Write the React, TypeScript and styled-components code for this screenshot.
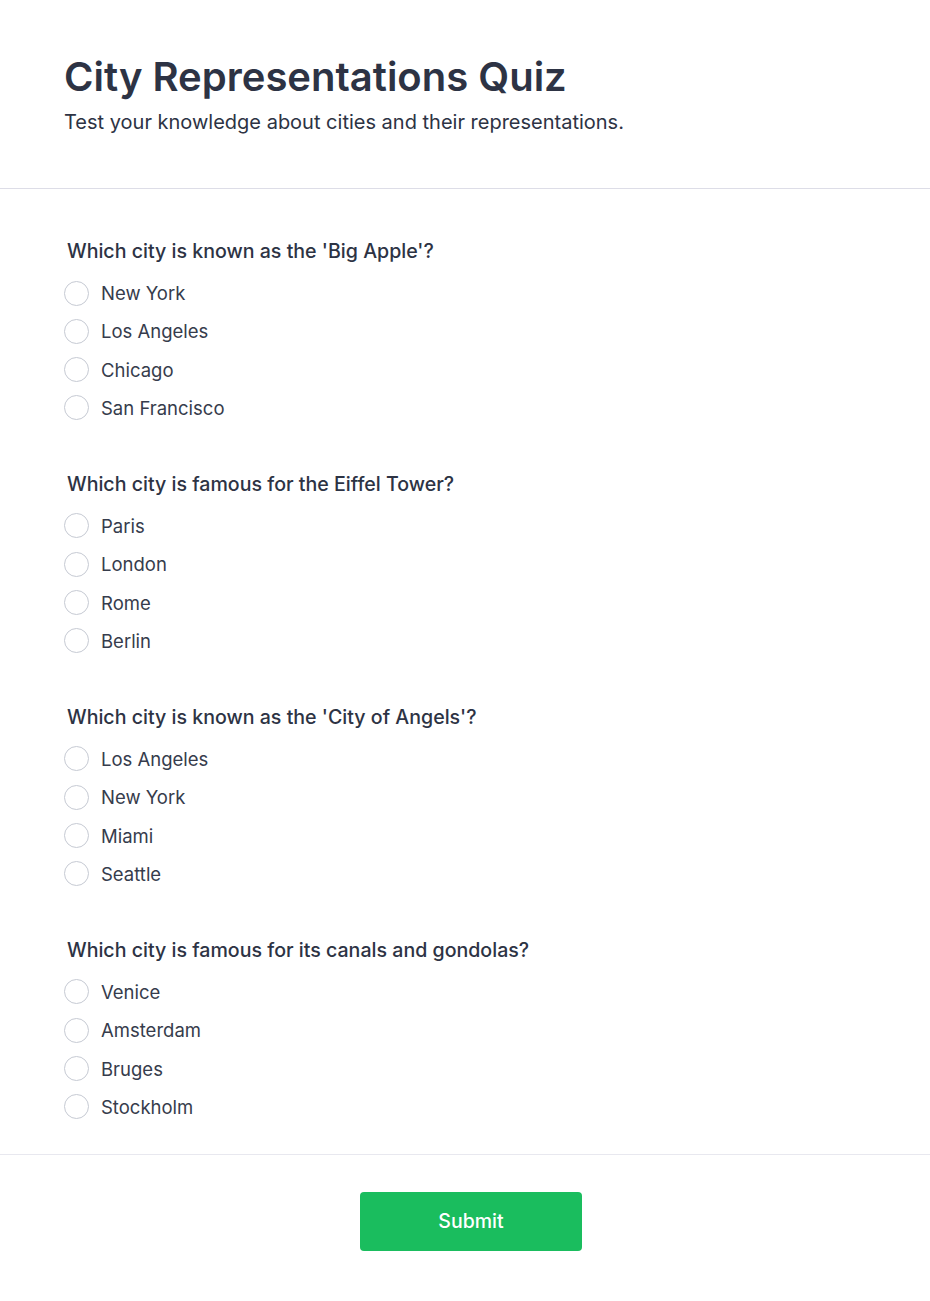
import React, { useState } from 'react'
import styled, { createGlobalStyle } from 'styled-components'

type Question = {
  id: string
  text: string
  options: string[]
}

const GlobalStyle = createGlobalStyle`
  body {
    margin: 0;
    background: #ffffff;
    font-family: Inter, "Noto Sans", Arial, sans-serif;
  }
`

const Header = styled.header`
  padding: 53px 64px 52px;
  border-bottom: 1px solid #dddde7;
`

const Title = styled.h1`
  margin: 0 0 7px;
  font-size: 40px;
  line-height: 1.2;
  font-weight: 600;
  color: #2d3344;
`

const Subtitle = styled.p`
  margin: 0;
  font-size: 20px;
  line-height: 1.4;
  color: #2d3344;
`

const Main = styled.main`
  display: flex;
  flex-direction: column;
  gap: 47.5px;
  padding: 47px 64px 33.5px;
  border-bottom: 1px solid #e8e8ef;
`

const Block = styled.fieldset`
  margin: 0;
  padding: 0;
  border: none;
`

const QuestionText = styled.legend`
  padding: 0 0 0 3px;
  margin-bottom: 13.5px;
  font-size: 19.6px;
  line-height: 30px;
  font-weight: 500;
  color: #2d3344;
`

const Options = styled.div`
  display: flex;
  flex-direction: column;
  gap: 11.33px;
`

const Option = styled.label`
  display: flex;
  align-items: center;
  gap: 12px;
  height: 27px;
  font-size: 18.5px;
  color: #363c4c;
  cursor: pointer;
`

const Radio = styled.input.attrs({ type: 'radio' })`
  appearance: none;
  margin: 0;
  width: 25px;
  height: 25px;
  border: 1px solid #c6cad3;
  border-radius: 50%;
  background: #fff;
  cursor: pointer;

  &:checked {
    border: 7px solid #1abd5e;
  }
`

const Footer = styled.footer`
  display: flex;
  justify-content: center;
  padding: 37px 0 50px 12px;
`

const SubmitBtn = styled.button`
  width: 222px;
  height: 59px;
  border: none;
  border-radius: 4px;
  background: #1abd5e;
  color: #ffffff;
  font-family: inherit;
  font-size: 19.5px;
  font-weight: 500;
  cursor: pointer;

  &:hover {
    opacity: 0.9;
  }
`

const questions: Question[] = [
  { id: 'q1', text: "Which city is known as the 'Big Apple'?", options: ['New York', 'Los Angeles', 'Chicago', 'San Francisco'] },
  { id: 'q2', text: 'Which city is famous for the Eiffel Tower?', options: ['Paris', 'London', 'Rome', 'Berlin'] },
  { id: 'q3', text: "Which city is known as the 'City of Angels'?", options: ['Los Angeles', 'New York', 'Miami', 'Seattle'] },
  { id: 'q4', text: 'Which city is famous for its canals and gondolas?', options: ['Venice', 'Amsterdam', 'Bruges', 'Stockholm'] },
]

export default function App() {
  const [answers, setAnswers] = useState<Record<string, string>>({})

  return (
    <>
      <GlobalStyle />
      <Header>
        <Title>City Representations Quiz</Title>
        <Subtitle>Test your knowledge about cities and their representations.</Subtitle>
      </Header>
      <Main>
        {questions.map((q) => (
          <Block key={q.id}>
            <QuestionText>{q.text}</QuestionText>
            <Options>
              {q.options.map((opt) => (
                <Option key={opt}>
                  <Radio
                    name={q.id}
                    value={opt}
                    checked={answers[q.id] === opt}
                    onChange={() => setAnswers({ ...answers, [q.id]: opt })}
                  />
                  {opt}
                </Option>
              ))}
            </Options>
          </Block>
        ))}
      </Main>
      <Footer>
        <SubmitBtn type="button">Submit</SubmitBtn>
      </Footer>
    </>
  )
}
